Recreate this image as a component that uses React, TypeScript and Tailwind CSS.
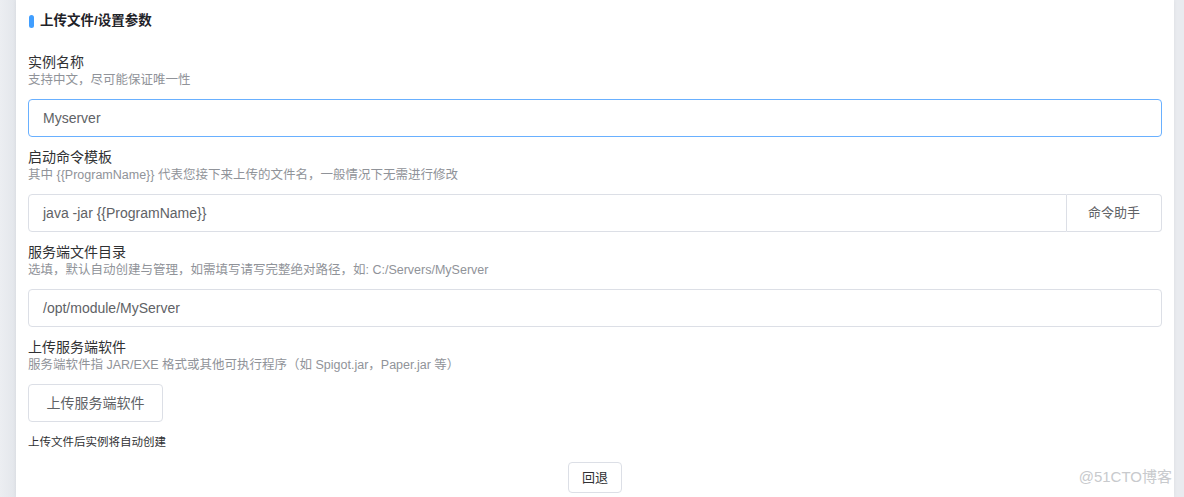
const font = { fontFamily: '"Liberation Sans", "Noto Sans CJK SC", sans-serif' };

interface FieldProps {
  label: string;
  hint: string;
  children: React.ReactNode;
}

const Field = ({ label, hint, children }: FieldProps) => (
  <div className="mb-[11px]">
    <div className="text-sm leading-[18px] text-[#303133]">{label}</div>
    <div className="text-[12.5px] leading-[18px] text-[#909399]">{hint}</div>
    <div className="mt-[10px]">{children}</div>
  </div>
);

const App = () => {
  return (
    <div className="flex h-[497px] w-[1184px] overflow-hidden bg-[#eceef2]" style={font}>
      <div className="h-full w-4 bg-gradient-to-r from-[#eceef2] to-[#e3e6eb]"></div>
      <div className="relative h-full w-[1158px] bg-white px-3 shadow-[0_0_4px_rgba(0,0,0,0.06)]">
        <div className="mt-[11px] flex h-5 items-center">
          <span className="ml-[1px] h-[13px] w-[5px] rounded-sm bg-[#409eff]"></span>
          <span className="ml-[6px] text-[13.5px] font-bold text-[#1f2329]">上传文件/设置参数</span>
        </div>

        <div className="mt-[22px]">
          <Field label="实例名称" hint="支持中文，尽可能保证唯一性">
            <div className="flex h-[38px] items-center rounded border border-[#69b0ff] px-[14px] text-sm text-[#606266]">
              Myserver
            </div>
          </Field>

          <Field label="启动命令模板" hint="其中 {{ProgramName}} 代表您接下来上传的文件名，一般情况下无需进行修改">
            <div className="flex h-[38px]">
              <div className="flex flex-1 items-center rounded-l border border-[#dcdfe6] px-[14px] text-sm text-[#606266]">
                {"java -jar {{ProgramName}}"}
              </div>
              <div className="flex w-[95px] items-center justify-center rounded-r border border-l-0 border-[#dcdfe6] text-[13px] text-[#606266]">
                命令助手
              </div>
            </div>
          </Field>

          <Field label="服务端文件目录" hint="选填，默认自动创建与管理，如需填写请写完整绝对路径，如: C:/Servers/MyServer">
            <div className="flex h-[38px] items-center rounded border border-[#dcdfe6] px-[14px] text-sm text-[#606266]">
              /opt/module/MyServer
            </div>
          </Field>

          <Field label="上传服务端软件" hint="服务端软件指 JAR/EXE 格式或其他可执行程序（如 Spigot.jar，Paper.jar 等）">
            <button className="flex h-[38px] w-[135px] items-center justify-center rounded border border-[#dcdfe6] text-sm text-[#606266]">
              上传服务端软件
            </button>
          </Field>

          <div className="text-[11.5px] leading-[18px] text-[#303133]">上传文件后实例将自动创建</div>

          <div className="mt-[11px] flex justify-center">
            <button className="flex h-[31px] w-[54px] items-center justify-center rounded border border-[#dcdfe6] text-[13px] text-[#303133]">
              回退
            </button>
          </div>
        </div>

        <div className="absolute bottom-[9px] right-[2px] text-[15px] text-[#c8cacd]">@51CTO博客</div>
      </div>
      <div className="h-full flex-1 bg-[#e9ebef]"></div>
    </div>
  );
};

export default App;
